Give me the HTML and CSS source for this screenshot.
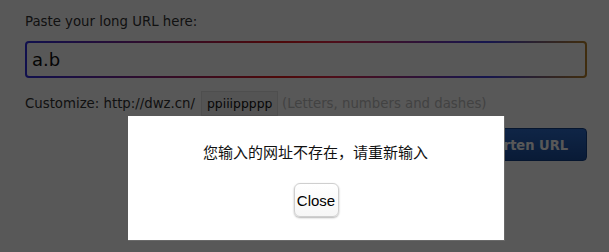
FILE: index.html
```html
<!DOCTYPE html>
<html>
<head>
<meta charset="utf-8">
<link rel="stylesheet" href="styles.css">
</head>
<body>
<div class="page">
  <div class="label">Paste your long URL here:</div>
  <div class="url-input">a.b</div>
  <div class="custom-row">
    <span class="custom-label">Customize: http://dwz.cn/</span>
    <span class="custom-box">ppiiippppp</span>
    <span class="hint">(Letters, numbers and dashes)</span>
  </div>
  <div class="action-row">
    <button class="shorten">Shorten URL</button>
  </div>
</div>
<div class="overlay"></div>
<div class="modal">
  <div class="modal-text">您输入的网址不存在，请重新输入</div>
  <button class="close-btn">Close</button>
</div>
</body>
</html>
```

FILE: styles.css
```css
html, body {
  margin: 0;
  padding: 0;
  background: #ffffff;
}
body {
  width: 609px;
  height: 252px;
  overflow: hidden;
  font-family: "DejaVu Sans", Verdana, sans-serif;
  color: #333333;
}
.page {
  padding: 14px 0 0 25px;
  width: 562px;
}
.label {
  font-size: 13.3px;
  line-height: 15px;
  color: #333333;
}
.url-input {
  margin-top: 12px;
  box-sizing: border-box;
  height: 37px;
  width: 562px;
  border: 2px solid transparent;
  border-radius: 4px;
  background:
    linear-gradient(#ffffff, #ffffff) padding-box,
    linear-gradient(90deg, #3030e0 0%, #e01a1a 45%, #e02a4a 55%, #4040e0 82%, #b8822a 100%) border-box;
  font-size: 18px;
  line-height: 33px;
  padding-left: 5px;
  color: #111;
}
.custom-row {
  margin-top: 13px;
  display: flex;
  align-items: center;
  height: 25px;
  font-size: 13.3px;
  color: #333333;
}
.custom-label {
  margin-right: 6px;
}
.custom-box {
  box-sizing: border-box;
  width: 77px;
  height: 25px;
  background: #f2f2f2;
  border: 1px solid #e2e2e2;
  font-size: 12.4px;
  line-height: 23px;
  padding-left: 5px;
  color: #111;
}
.hint {
  margin-left: 4px;
  color: #c0c0c0;
}
.action-row {
  margin-top: 12px;
  display: flex;
  justify-content: flex-end;
}
.shorten {
  box-sizing: border-box;
  width: 150px;
  height: 33px;
  border: 1px solid #14418a;
  border-radius: 4px;
  background: linear-gradient(#2e6ccc, #1b4f9e);
  color: #ffffff;
  font-family: "DejaVu Sans Condensed", "DejaVu Sans", sans-serif;
  font-weight: bold;
  font-size: 14.5px;
  padding: 0 18px 0 0;
  text-align: right;
}
.overlay {
  position: fixed;
  left: 0;
  top: 0;
  right: 0;
  bottom: 0;
  background: rgba(0, 0, 0, 0.655);
}
.modal {
  position: fixed;
  left: 128px;
  top: 116px;
  width: 377px;
  height: 125px;
  box-sizing: border-box;
  background: #ffffff;
  border-right: 1px solid #6a6a6a;
  border-bottom: 1px solid #6a6a6a;
  display: flex;
  flex-direction: column;
  align-items: center;
  padding-top: 26px;
}
.modal-text {
  font-family: "Noto Sans CJK SC", "Noto Sans", sans-serif;
  font-size: 15px;
  line-height: 20px;
  color: #111;
  padding-right: 1px;
}
.close-btn {
  margin-top: 21px;
  box-sizing: border-box;
  width: 45px;
  height: 34px;
  padding: 0;
  border: 1px solid #cfcfcf;
  border-radius: 6px;
  background: linear-gradient(#ffffff, #f6f6f6);
  box-shadow: 0 1px 2px rgba(0, 0, 0, 0.3);
  font-family: "Liberation Sans", Arial, sans-serif;
  font-size: 15px;
  color: #000;
}
```
